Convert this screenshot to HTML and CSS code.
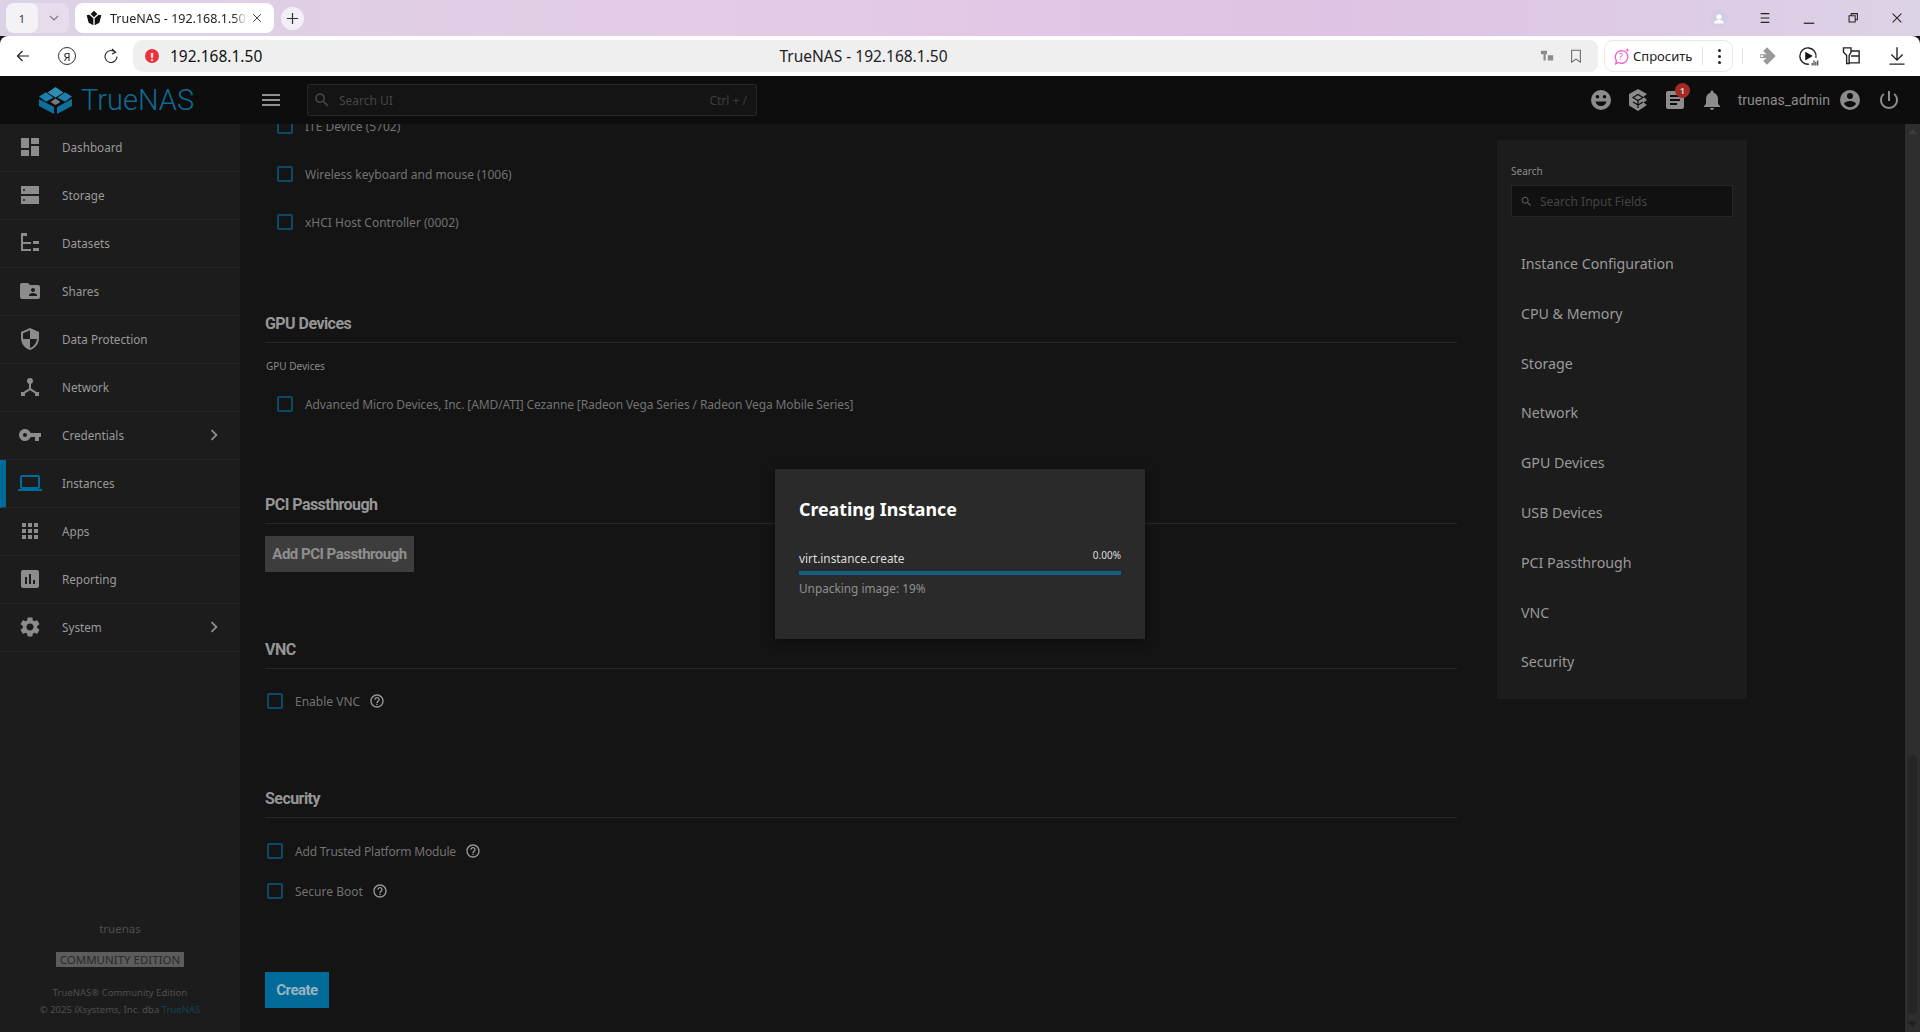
FILE: index.html
```html
<!DOCTYPE html>
<html lang="en">
<head>
    <meta charset="UTF-8">
    <title>TrueNAS - 192.168.1.50</title>
    <link rel="stylesheet" href="styles.css">
</head>
<body>
    <div class="tabbar">
        <div class="tab-group">
            <span class="tab-count">1</span>
            <svg class="tab-caret" viewBox="0 0 12 12"><path d="M2 4l4 4 4-4" fill="none" stroke="#7a7a85" stroke-width="1.2"/></svg>
        </div>
        <div class="tab">
            <svg class="tab-favicon" viewBox="0 0 24 24"><path d="M12 1l5 5-5 5-5-5zM1 8l4-1 6 5.5V23l-7-4zM23 8l-4-1-6 5.5V23l7-4z" fill="#111"/></svg>
            <span class="tab-title">TrueNAS - 192.168.1.50</span>
            <svg class="tab-close" viewBox="0 0 12 12"><path d="M1.5 1.5l9 9M10.5 1.5l-9 9" stroke="#333" stroke-width="1.1"/></svg>
        </div>
        <div class="tab-new">
            <svg viewBox="0 0 14 14"><path d="M7 1v12M1 7h12" stroke="#333" stroke-width="1.3"/></svg>
        </div>
        <div class="window-btns">
            <span class="profile-dot"><svg viewBox="0 0 16 16"><circle cx="8" cy="5.5" r="3" fill="#fff"/><path d="M2.5 13c0-3 3-4 5.5-4s5.5 1 5.5 4z" fill="#fff"/></svg></span>
            <svg class="win-icon" viewBox="0 0 16 16"><path d="M3 3h10M3 8h10M3 13h10" stroke="#222" stroke-width="1.2"/></svg>
            <svg class="win-icon" viewBox="0 0 16 16"><path d="M2 14h12" stroke="#222" stroke-width="1.4"/></svg>
            <svg class="win-icon" viewBox="0 0 16 16"><path d="M3.5 5.5h7v7h-7zM6 5.5V3h7v7h-2.5" fill="none" stroke="#222" stroke-width="1.2"/></svg>
            <svg class="win-icon" viewBox="0 0 16 16"><path d="M3 3l10 10M13 3L3 13" stroke="#222" stroke-width="1.2"/></svg>
        </div>
    </div>

    <div class="toolbar">
        <svg class="tool-icon" viewBox="0 0 16 16"><path d="M14 8H2.5M7.5 3L2.5 8l5 5" fill="none" stroke="#222" stroke-width="1.2"/></svg>
        <span class="ya-icon">Я</span>
        <svg class="tool-icon reload" viewBox="0 0 16 16"><path d="M12.5 4.5A6 6 0 1 0 14 8.5M9 1l3.7 3.3L9 6" fill="none" stroke="#222" stroke-width="1.1"/></svg>
        <div class="addressbar">
            <span class="warn-dot">!</span>
            <span class="address">192.168.1.50</span>
            <span class="page-title">TrueNAS - 192.168.1.50</span>
            <svg class="addr-icon" viewBox="0 0 16 16"><path d="M1 2h7v4H6.500v7H4V6H1zM9 7h6v6H9z" fill="#8b8b8b"/></svg>
            <svg class="addr-icon" viewBox="0 0 16 16"><path d="M3 1.5h10V15l-5-3.5L3 15z" fill="none" stroke="#666" stroke-width="1.2"/></svg>
        </div>
        <div class="ask-box">
            <svg class="ask-icon" viewBox="0 0 16 16"><path d="M8 2.5a6 6 0 1 1-3 11.2L2.500 15l.7-3.200A6 6 0 0 1 8 2.500z" fill="none" stroke="#ee5fc6" stroke-width="1.2"/><text x="5.5" y="11.5" font-size="9" font-family="Noto Sans, sans-serif" fill="#ee5fc6">?</text><path d="M13.5 0l.6 1.4 1.4.6-1.400.6-.6 1.400-.6-1.400-1.400-.6 1.400-.6z" fill="#ee5fc6"/></svg>
            <span class="ask-text">Спросить</span>
            <span class="ask-sep"></span>
            <span class="ask-more"><i></i><i></i><i></i></span>
        </div>
        <span class="tool-sep"></span>
        <svg class="tool-icon ext" viewBox="0 0 16 16"><path fill-rule="evenodd" d="M8 1l7 7-7 7-3-3 2.500-2.500H2.500V6.500h5L5 4zM3 7.300h2v1.400H3z" fill="#9a9a9a"/></svg>
        <svg class="tool-icon ext" viewBox="0 0 16 16"><path d="M13.5 9.500A6.500 6.500 0 1 0 8 14.500" fill="none" stroke="#222" stroke-width="1.1"/><path d="M5 4.500l6 3.500-6 3.500z" fill="#111"/><path d="M10.500 15.500v-2M12 15.500v-4M13.500 15.500v-3M15 15.500v-4" stroke="#333" stroke-width=".9"/></svg>
        <svg class="tool-icon ext" viewBox="0 0 16 16"><path d="M2 1.500h6V5L6.500 7.500V14h-2V7.500L2 5zM8 4h6.500v9.500H6.500M8 8h6.500" fill="none" stroke="#222" stroke-width="1.1"/></svg>
        <svg class="tool-icon ext" viewBox="0 0 16 16"><path d="M8 1v10M3.500 6.800L8 11.300l4.500-4.500M2 14.500h12" fill="none" stroke="#222" stroke-width="1.1"/></svg>
    </div>

    <div class="app">
        <header class="topbar">
            <div class="logo">
                <svg class="logo-mark" viewBox="0 0 33 27">
                    <path d="M16.500 0l8 5.500-8 5-8-5z" fill="#2e8cb5"/>
                    <path d="M0 9.500l7-4.200 7.500 5.500-7.500 4z" fill="#1a80ab"/>
                    <path d="M33 9.500l-7-4.200-7.500 5.500 7.500 4z" fill="#1a80ab"/>
                    <path d="M0 12l15 8v7L0 19z" fill="#0f6f9b"/>
                    <path d="M33 12l-15 8v7l15-8z" fill="#0f6f9b"/>
                    <path d="M16.500 11.500l5 3.500-5 3-5-3z" fill="#7a7a7a"/>
                </svg>
                <span class="logo-text">TrueNAS</span>
            </div>
            <svg class="menu-icon" viewBox="0 0 24 24"><path d="M3 18h18v-2H3v2zm0-5h18v-2H3v2zm0-7v2h18V6H3z"/></svg>
            <div class="top-search">
                <svg viewBox="0 0 24 24"><path d="M15.500 14h-.79l-.28-.27C15.410 12.590 16 11.110 16 9.500 16 5.910 13.090 3 9.500 3S3 5.910 3 9.500 5.910 16 9.500 16c1.610 0 3.090-.59 4.230-1.570l.27.28v.79l5 4.990L20.490 19l-4.990-5zm-6 0C7.010 14 5 11.990 5 9.500S7.010 5 9.500 5 14 7.010 14 9.500 11.990 14 9.500 14z"/></svg>
                <span class="top-search-text">Search UI</span>
                <span class="top-search-key">Ctrl + /</span>
            </div>
            <div class="top-actions">
                <svg class="top-icon" viewBox="0 0 24 24"><path fill-rule="evenodd" d="M12 2a10 10 0 1 0 0 20 10 10 0 0 0 0-20zM8.500 7a1.800 1.800 0 1 1 0 3.600 1.800 1.800 0 0 1 0-3.600zm7 0a1.800 1.800 0 1 1 0 3.600 1.800 1.800 0 0 1 0-3.600zM12 18c-3 0-5-2-5.500-4.500h11C17 16 15 18 12 18z"/></svg>
                <svg class="top-icon" viewBox="0 0 24 24"><path d="M12 1l9 5-3.500 2.800L21 12l-3.500 2.500L21 17l-9 6-9-5.500V6z"/><path d="M7 9.500l5-3 5 3-5 3zM12 12.500V20M7 14l5 3 5-3" fill="none" stroke="#0d0d0d" stroke-width="1.2"/></svg>
                <span class="jobs-btn">
                    <svg class="top-icon" viewBox="0 0 24 24"><path d="M19 3H5c-1.100 0-2 .9-2 2v14c0 1.100.9 2 2 2h14c1.100 0 2-.9 2-2V5c0-1.100-.9-2-2-2zm-5 14H7v-2h7v2zm3-4H7v-2h10v2zm0-4H7V7h10v2z"/></svg>
                    <span class="jobs-badge">1</span>
                </span>
                <svg class="top-icon" viewBox="0 0 24 24"><path d="M12 22c1.100 0 2-.9 2-2h-4c0 1.100.89 2 2 2zm6-6v-5c0-3.070-1.640-5.640-4.500-6.320V4c0-.83-.67-1.500-1.500-1.500s-1.500.67-1.500 1.500v.68C7.630 5.360 6 7.920 6 11v5l-2 2v1h16v-1l-2-2z"/></svg>
                <span class="top-user">truenas_admin</span>
                <svg class="top-icon" viewBox="0 0 24 24"><path d="M12 19.200C9.500 19.200 7.290 17.920 6 16c.03-2 4-3.100 6-3.100s5.970 1.100 6 3.100c-1.290 1.920-3.500 3.200-6 3.200M12 5a3 3 0 0 1 3 3 3 3 0 0 1-3 3 3 3 0 0 1-3-3 3 3 0 0 1 3-3m0-3A10 10 0 0 0 2 12a10 10 0 0 0 10 10 10 10 0 0 0 10-10A10 10 0 0 0 12 2z"/></svg>
                <svg class="top-icon" viewBox="0 0 24 24"><path d="M13 3h-2v10h2V3zm4.830 2.170l-1.420 1.420C17.990 7.860 19 9.810 19 12c0 3.870-3.130 7-7 7s-7-3.130-7-7c0-2.190 1.010-4.140 2.580-5.420L6.170 5.170C4.230 6.820 3 9.260 3 12c0 4.970 4.030 9 9 9s9-4.030 9-9c0-2.740-1.230-5.180-3.170-6.830z"/></svg>
            </div>
        </header>

        <div class="shell">
            <aside class="sidebar">
                <nav class="side-nav">
                    <a class="side-item"><svg viewBox="0 0 24 24"><path d="M3 13h8V3H3v10zm0 8h8v-6H3v6zm10 0h8V11h-8v10zm0-18v6h8V3h-8z"/></svg>Dashboard</a>
                    <a class="side-item"><svg viewBox="0 0 24 24"><path fill-rule="evenodd" d="M3 13h18v8H3zM3 3h18v8H3zM6 18a1 1 0 1 0 0-2 1 1 0 0 0 0 2zM6 8a1 1 0 1 0 0-2 1 1 0 0 0 0 2z"/></svg>Storage</a>
                    <a class="side-item"><svg viewBox="0 0 24 24"><path d="M3 2h6v3H5v6h3v2H5v5h3v2H3V5zM15 10h6v3h-6zM15 17h6v3h-6zM8 11h5v2H8zM8 18h5v2H8z"/></svg>Datasets</a>
                    <a class="side-item"><svg viewBox="0 0 24 24"><path d="M20 6h-8l-2-2H4c-1.100 0-1.990.9-1.990 2L2 18c0 1.100.9 2 2 2h16c1.100 0 2-.9 2-2V8c0-1.100-.9-2-2-2zm-5 3c1.100 0 2 .9 2 2s-.9 2-2 2-2-.9-2-2 .9-2 2-2zm4 8h-8v-1c0-1.330 2.670-2 4-2s4 .67 4 2v1z"/></svg>Shares</a>
                    <a class="side-item"><svg viewBox="0 0 24 24"><path d="M12 1L3 5v6c0 5.550 3.840 10.740 9 12 5.160-1.260 9-6.450 9-12V5l-9-4zm0 10.990h7c-.53 4.120-3.280 7.790-7 8.940V12H5V6.300l7-3.110v8.800z"/></svg>Data Protection</a>
                    <a class="side-item"><svg viewBox="0 0 24 24"><circle cx="12" cy="6" r="3"/><path d="M11 8h2v5.500l6 3.700-1 1.700-6-3.700-6 3.700-1-1.700 6-3.700z"/><path d="M3 17h4v4H3zM17 17h4v4h-4z"/></svg>Network</a>
                    <a class="side-item"><svg viewBox="0 0 24 24"><path d="M12.650 10C11.830 7.670 9.610 6 7 6c-3.310 0-6 2.690-6 6s2.690 6 6 6c2.610 0 4.830-1.670 5.650-4H17v4h4v-4h2v-4H12.650zM7 14c-1.100 0-2-.9-2-2s.9-2 2-2 2 .9 2 2-.9 2-2 2z"/></svg>Credentials<svg class="side-chevron" viewBox="0 0 24 24"><path d="M8.590 16.590L13.170 12 8.590 7.410 10 6l6 6-6 6z"/></svg></a>
                    <a class="side-item active"><svg viewBox="0 0 24 24"><path d="M20 18c1.100 0 1.990-.9 1.990-2L22 6c0-1.100-.9-2-2-2H4c-1.100 0-2 .9-2 2v10c0 1.100.9 2 2 2H0v2h24v-2h-4zM4 6h16v10H4V6z"/></svg>Instances</a>
                    <a class="side-item"><svg viewBox="0 0 24 24"><path d="M4 8h4V4H4v4zm6 12h4v-4h-4v4zm-6 0h4v-4H4v4zm0-6h4v-4H4v4zm6 0h4v-4h-4v4zm6-10v4h4V4h-4zm-6 4h4V4h-4v4zm6 6h4v-4h-4v4zm0 6h4v-4h-4v4z"/></svg>Apps</a>
                    <a class="side-item"><svg viewBox="0 0 24 24"><path d="M19 3H5c-1.100 0-2 .9-2 2v14c0 1.100.9 2 2 2h14c1.100 0 2-.9 2-2V5c0-1.100-.9-2-2-2zM9 17H7v-7h2v7zm4 0h-2V7h2v10zm4 0h-2v-4h2v4z"/></svg>Reporting</a>
                    <a class="side-item"><svg viewBox="0 0 24 24"><path d="M19.140 12.940c.04-.3.06-.61.06-.94 0-.32-.02-.64-.07-.94l2.030-1.580c.18-.14.23-.41.12-.61l-1.920-3.320c-.12-.22-.37-.29-.59-.22l-2.390.96c-.5-.38-1.030-.7-1.620-.94l-.36-2.540c-.04-.24-.24-.41-.48-.41h-3.840c-.24 0-.43.17-.47.41l-.36 2.540c-.59.24-1.130.57-1.620.94l-2.390-.96c-.22-.08-.47 0-.59.22L2.740 8.870c-.12.21-.08.47.12.61l2.030 1.580c-.05.3-.09.63-.09.94s.02.64.07.94l-2.030 1.580c-.18.14-.23.41-.12.61l1.920 3.320c.12.22.37.29.59.22l2.390-.96c.5.38 1.030.7 1.620.94l.36 2.540c.05.24.24.41.48.41h3.840c.24 0 .44-.17.47-.41l.36-2.540c.59-.24 1.130-.56 1.620-.94l2.390.96c.22.08.47 0 .59-.22l1.920-3.320c.12-.22.07-.47-.12-.61l-2.010-1.580zM12 15.600c-1.980 0-3.600-1.620-3.600-3.600s1.620-3.600 3.600-3.600 3.600 1.620 3.600 3.600-1.620 3.600-3.600 3.600z"/></svg>System<svg class="side-chevron" viewBox="0 0 24 24"><path d="M8.590 16.590L13.170 12 8.590 7.410 10 6l6 6-6 6z"/></svg></a>
                </nav>
                <div class="side-footer">
                    <div class="host-name">truenas</div>
                    <div class="edition">COMMUNITY EDITION</div>
                    <div class="copyright">TrueNAS® Community Edition</div>
                    <div class="copyright">© 2025 iXsystems, Inc. dba <span class="copy-link">TrueNAS</span></div>
                </div>
            </aside>

            <main class="main">
                <form class="form">
                    <div class="usb-list">
                        <label class="check-row indented"><span class="check"></span>ITE Device (5702)</label>
                        <label class="check-row indented"><span class="check"></span>Wireless keyboard and mouse (1006)</label>
                        <label class="check-row indented"><span class="check"></span>xHCI Host Controller (0002)</label>
                    </div>

                    <section class="section gpu">
                        <h3 class="section-title">GPU Devices</h3>
                        <div class="field-label">GPU Devices</div>
                        <label class="check-row indented tight"><span class="check"></span>Advanced Micro Devices, Inc. [AMD/ATI] Cezanne [Radeon Vega Series / Radeon Vega Mobile Series]</label>
                    </section>

                    <section class="section pci">
                        <h3 class="section-title">PCI Passthrough</h3>
                        <button type="button" class="btn-grey">Add PCI Passthrough</button>
                    </section>

                    <section class="section vnc">
                        <h3 class="section-title">VNC</h3>
                        <label class="check-row"><span class="check"></span>Enable VNC<svg class="help" viewBox="0 0 24 24"><path d="M11 18h2v-2h-2v2zm1-16C6.480 2 2 6.480 2 12s4.480 10 10 10 10-4.480 10-10S17.520 2 12 2zm0 18c-4.410 0-8-3.590-8-8s3.590-8 8-8 8 3.590 8 8-3.590 8-8 8zm0-14c-2.210 0-4 1.790-4 4h2c0-1.100.9-2 2-2s2 .9 2 2c0 2-3 1.750-3 5h2c0-2.250 3-2.500 3-5 0-2.210-1.790-4-4-4z"/></svg></label>
                    </section>

                    <section class="section security">
                        <h3 class="section-title">Security</h3>
                        <label class="check-row tight"><span class="check"></span>Add Trusted Platform Module<svg class="help" viewBox="0 0 24 24"><path d="M11 18h2v-2h-2v2zm1-16C6.480 2 2 6.480 2 12s4.480 10 10 10 10-4.480 10-10S17.520 2 12 2zm0 18c-4.410 0-8-3.590-8-8s3.590-8 8-8 8 3.590 8 8-3.590 8-8 8zm0-14c-2.210 0-4 1.790-4 4h2c0-1.100.9-2 2-2s2 .9 2 2c0 2-3 1.750-3 5h2c0-2.250 3-2.500 3-5 0-2.210-1.790-4-4-4z"/></svg></label>
                        <label class="check-row"><span class="check"></span>Secure Boot<svg class="help" viewBox="0 0 24 24"><path d="M11 18h2v-2h-2v2zm1-16C6.480 2 2 6.480 2 12s4.480 10 10 10 10-4.480 10-10S17.520 2 12 2zm0 18c-4.410 0-8-3.590-8-8s3.590-8 8-8 8 3.590 8 8-3.590 8-8 8zm0-14c-2.210 0-4 1.790-4 4h2c0-1.100.9-2 2-2s2 .9 2 2c0 2-3 1.750-3 5h2c0-2.250 3-2.500 3-5 0-2.210-1.790-4-4-4z"/></svg></label>
                    </section>

                    <button type="button" class="btn-create">Create</button>
                </form>

                <div class="form-panel">
                    <div class="panel-label">Search</div>
                    <div class="panel-search">
                        <svg viewBox="0 0 24 24"><path d="M15.500 14h-.79l-.28-.27C15.410 12.590 16 11.110 16 9.500 16 5.910 13.090 3 9.500 3S3 5.910 3 9.500 5.910 16 9.500 16c1.610 0 3.090-.59 4.230-1.570l.27.28v.79l5 4.990L20.490 19l-4.990-5zm-6 0C7.010 14 5 11.990 5 9.500S7.010 5 9.500 5 14 7.010 14 9.500 11.990 14 9.500 14z"/></svg>
                        <span>Search Input Fields</span>
                    </div>
                    <ul class="panel-nav">
                        <li>Instance Configuration</li>
                        <li>CPU &amp; Memory</li>
                        <li>Storage</li>
                        <li>Network</li>
                        <li>GPU Devices</li>
                        <li>USB Devices</li>
                        <li>PCI Passthrough</li>
                        <li>VNC</li>
                        <li>Security</li>
                    </ul>
                </div>

                <div class="scrollbar">
                    <svg class="scroll-arrow up" viewBox="0 0 10 6"><path d="M5 0l5 6H0z"/></svg>
                    <div class="scroll-track"><div class="scroll-thumb"></div></div>
                    <svg class="scroll-arrow" viewBox="0 0 10 6"><path d="M5 6L0 0h10z"/></svg>
                </div>
            </main>
        </div>

        <div class="overlay">
            <div class="dialog">
                <h2 class="dialog-title">Creating Instance</h2>
                <div class="job-head">
                    <span class="job-name">virt.instance.create</span>
                    <span class="job-pct">0.00%</span>
                </div>
                <div class="job-bar"></div>
                <div class="job-status">Unpacking image: 19%</div>
            </div>
        </div>
    </div>
</body>
</html>
```

FILE: styles.css
```css
* {
    box-sizing: border-box;
}
html, body {
    height: 100%;
    margin: 0;
    overflow: hidden;
}
body {
    display: flex;
    flex-direction: column;
    font-family: "Noto Sans", sans-serif;
    background: #141414;
}
svg {
    display: block;
    flex: none;
}

/* browser chrome */
.tabbar {
    height: 36px;
    flex: none;
    display: flex;
    align-items: center;
    padding-left: 6px;
    background: linear-gradient(90deg, #dcd2e6 0%, #e4cce6 35%, #dfc3e4 70%, #dcd2e6 100%);
}
.tab-group {
    width: 63px;
    height: 30px;
    display: flex;
    align-items: center;
    border-radius: 8px;
    background: #e6dcec;
}
.tab-count {
    width: 32px;
    height: 30px;
    display: flex;
    align-items: center;
    justify-content: center;
    border-radius: 8px;
    font-size: 11px;
    color: #333;
    background: #f4f2f7;
}
.tab-caret {
    width: 12px;
    height: 12px;
    margin-left: 10px;
}
.tab {
    width: 199px;
    height: 30px;
    margin-left: 6px;
    display: flex;
    align-items: center;
    padding-left: 11px;
    border-radius: 8px;
    background: #fff;
}
.tab-favicon {
    width: 16px;
    height: 16px;
}
.tab-title {
    width: 137px;
    margin-left: 8px;
    overflow: hidden;
    white-space: nowrap;
    font-size: 12.5px;
    color: #222;
    -webkit-mask-image: linear-gradient(90deg, #000 90%, transparent);
}
.tab-close {
    width: 10px;
    height: 10px;
    margin-left: 5px;
}
.tab-new {
    width: 23px;
    height: 23px;
    margin-left: 7px;
    padding: 5px;
    border-radius: 50%;
    background: #f3eff6;
}
.window-btns {
    margin-left: auto;
    display: flex;
    align-items: center;
}
.profile-dot {
    width: 18px;
    height: 19px;
    margin-right: 30px;
    padding: 3px 2px;
    border-radius: 50%;
    background: #d2cde4;
}
.win-icon {
    width: 14px;
    height: 14px;
    margin-right: 30px;
}
.win-icon:last-child {
    margin-right: 16px;
}

.toolbar {
    height: 40px;
    flex: none;
    display: flex;
    align-items: center;
    padding: 0 13px 0 15px;
    border-radius: 8px 8px 0 0;
    background: #fff;
}
.tool-icon {
    width: 16px;
    height: 16px;
}
.ya-icon {
    width: 18px;
    height: 18px;
    margin-left: 27px;
    display: flex;
    align-items: center;
    justify-content: center;
    border: 1px solid #333;
    border-radius: 50%;
    font-size: 11px;
    color: #222;
}
.reload {
    margin-left: 27px;
}
.addressbar {
    flex: 1;
    height: 32px;
    margin-left: 14px;
    position: relative;
    display: flex;
    align-items: center;
    padding: 0 15px 0 12px;
    border-radius: 10px 8px 8px 10px;
    background: #efefef;
}
.warn-dot {
    width: 14px;
    height: 14px;
    display: flex;
    align-items: center;
    justify-content: center;
    border-radius: 50%;
    font-size: 11px;
    font-weight: 700;
    color: #fff;
    background: #e8323c;
}
.address {
    margin-left: 11px;
    font-size: 15.5px;
    color: #111;
}
.page-title {
    position: absolute;
    left: 0;
    right: 0;
    padding-right: 4px;
    text-align: center;
    font-size: 15.5px;
    color: #222;
}
.addr-icon {
    width: 14px;
    height: 14px;
    margin-left: 15px;
}
.page-title + .addr-icon {
    margin-left: auto;
}
.ask-box {
    width: 129px;
    height: 32px;
    margin-left: 6px;
    display: flex;
    align-items: center;
    padding: 0 11px 0 8px;
    border: 1px solid #e8e8e8;
    border-radius: 9px;
}
.ask-icon {
    width: 17px;
    height: 17px;
}
.ask-text {
    margin-left: 3px;
    font-size: 13px;
    white-space: nowrap;
    color: #222;
}
.ask-sep {
    width: 1px;
    height: 18px;
    margin-left: auto;
    background: #e3e3e3;
}
.ask-more {
    width: 3px;
    margin-left: 15px;
    display: flex;
    flex-direction: column;
    gap: 3px;
}
.ask-more i {
    width: 3px;
    height: 3px;
    border-radius: 50%;
    background: #222;
}
.tool-sep {
    width: 1px;
    height: 16px;
    margin-left: 9px;
    background: #e3e3e3;
}
.ext {
    width: 20px;
    height: 20px;
    margin-left: 22px;
}
.tool-sep + .ext {
    margin-left: 14px;
}
.ext:last-child {
    margin-left: 26px;
}

/* truenas */
.app {
    flex: 1;
    min-height: 0;
    position: relative;
    display: flex;
    flex-direction: column;
}
.topbar {
    height: 48px;
    flex: none;
    position: relative;
    z-index: 2;
    display: flex;
    align-items: center;
    background: #0d0d0d;
}
.logo {
    width: 240px;
    padding-left: 39px;
    display: flex;
    align-items: center;
}
.logo-mark {
    width: 33px;
    height: 27px;
}
.logo-text {
    margin-left: 9px;
    font-family: Roboto, sans-serif;
    font-size: 29px;
    font-weight: 300;
    color: #0f6a92;
}
.menu-icon {
    width: 24px;
    height: 24px;
    margin-left: 19px;
    fill: #8f8f8f;
}
.top-search {
    width: 450px;
    height: 32px;
    margin-left: 24px;
    display: flex;
    align-items: center;
    padding: 0 9px 0 5px;
    border: 1px solid #262626;
    border-radius: 2px;
    background: #141414;
}
.top-search svg {
    width: 18px;
    height: 18px;
    fill: #474747;
}
.top-search-text {
    margin-left: 8px;
    font-size: 12px;
    color: #464646;
}
.top-search-key {
    margin-left: auto;
    font-size: 12px;
    color: #3d3d3d;
}
.top-actions {
    margin-left: auto;
    padding-right: 19px;
    display: flex;
    align-items: center;
}
.top-icon {
    width: 24px;
    height: 24px;
    fill: #8c8c8c;
}
.top-actions > svg, .jobs-btn {
    margin-left: 13px;
}
.top-actions > svg:last-child {
    margin-left: 15px;
}
.jobs-btn {
    position: relative;
}
.jobs-badge {
    position: absolute;
    top: -5px;
    right: -3px;
    width: 15px;
    height: 15px;
    border-radius: 50%;
    display: flex;
    align-items: center;
    justify-content: center;
    font-size: 9px;
    font-weight: 700;
    color: #ccc;
    background: #a52a25;
}
.top-user {
    margin-left: 14px;
    font-family: Roboto, sans-serif;
    font-size: 14px;
    color: #8c8c8c;
}
.top-actions .top-user + svg {
    margin-left: 8px;
}

.shell {
    flex: 1;
    min-height: 0;
    display: flex;
}
.sidebar {
    width: 240px;
    flex: none;
    display: flex;
    flex-direction: column;
    background: #1c1c1c;
}
.side-nav {
    display: flex;
    flex-direction: column;
}
.side-item {
    height: 48px;
    display: flex;
    align-items: center;
    padding: 0 0 1px 18px;
    border-bottom: 1px solid #262626;
    font-size: 11.7px;
    color: #9a9a9a;
}
.side-item svg {
    width: 24px;
    height: 24px;
    margin-right: 20px;
    fill: #8c8c8c;
}
.side-item .side-chevron {
    width: 22px;
    height: 22px;
    margin: 0 0 0 auto;
    position: relative;
    left: -15px;
}
.side-item.active {
    border-left: 6px solid #006a98;
    padding-left: 12px;
}
.side-item.active svg {
    fill: #006a98;
}
.side-footer {
    margin-top: auto;
    padding-bottom: 12px;
    display: flex;
    flex-direction: column;
    align-items: center;
}
.host-name {
    font-size: 11.5px;
    color: #4f4f4f;
}
.edition {
    margin: 16px 0 19px;
    padding: 0 4px;
    height: 15px;
    line-height: 15px;
    font-size: 11.5px;
    color: #2a2a2a;
    background: #5c5c5c;
}
.copyright {
    height: 17px;
    font-size: 9.5px;
    color: #4f4f4f;
}
.copy-link {
    color: #0f4258;
}

.main {
    flex: 1;
    min-width: 0;
    display: flex;
    align-items: flex-start;
    overflow: hidden;
    background: #141414;
}
.form {
    width: 1192px;
    flex: none;
    margin: -22px 0 0 25px;
}
.usb-list {
    display: flex;
    flex-direction: column;
}
.check-row {
    height: 48px;
    display: flex;
    align-items: center;
    padding-left: 2px;
    font-size: 12px;
    color: #727272;
}
.check-row.indented {
    padding-left: 12px;
}
.check-row.tight {
    letter-spacing: -0.12px;
}
.security .check-row.tight {
    letter-spacing: -0.2px;
}
.check {
    width: 16px;
    height: 16px;
    margin-right: 12px;
    border: 2px solid #0b4a68;
    border-radius: 2px;
}
.help {
    width: 16px;
    height: 16px;
    margin-left: 9px;
    fill: #9a9a9a;
}
.section {
    display: flex;
    flex-direction: column;
}
.section-title {
    margin: 0;
    height: 29px;
    padding-bottom: 10px;
    border-bottom: 1px solid #272727;
    font-family: Roboto, sans-serif;
    font-size: 16px;
    font-weight: 700;
    letter-spacing: -0.55px;
    color: #969696;
}
.gpu {
    margin-top: 68px;
}
.field-label {
    margin-top: 15.5px;
    font-size: 10px;
    line-height: 14px;
    color: #8a8a8a;
    padding-left: 1px;
}
.gpu .check-row {
    margin-top: 7.5px;
}
.pci {
    margin-top: 67px;
}
.btn-grey, .btn-create {
    height: 36px;
    padding: 0;
    border: 0;
    font-family: Roboto, sans-serif;
    font-size: 15px;
    font-weight: 700;
    letter-spacing: -0.5px;
}
.btn-grey {
    width: 149px;
    margin-top: 12px;
    color: #8f8f8f;
    background: #3d3d3d;
}
.vnc {
    margin-top: 68px;
}
.vnc .check-row {
    margin-top: 8px;
}
.security {
    margin-top: 64px;
}
.security .check-row {
    height: 40px;
}
.security .check-row:first-of-type {
    margin-top: 13px;
}
.btn-create {
    display: block;
    width: 64px;
    margin-top: 61px;
    color: #9ab4c2;
    background: #006a98;
}

.form-panel {
    width: 250px;
    flex: none;
    margin: 16px 0 0 40px;
    padding: 24px 14px 12px;
    background: #1c1c1c;
}
.panel-label {
    font-size: 10px;
    line-height: 14px;
    color: #8a8a8a;
}
.panel-search {
    height: 32px;
    margin-top: 7px;
    display: flex;
    align-items: center;
    padding-left: 8px;
    border: 1px solid #262626;
    background: #111;
    font-size: 12px;
    color: #444;
}
.panel-search svg {
    width: 13px;
    height: 13px;
    margin-right: 7px;
    fill: #595959;
}
.panel-nav {
    margin: 22px 0 0;
    padding: 0 0 0 10px;
    list-style: none;
}
.panel-nav li {
    height: 49.8px;
    line-height: 49.8px;
    font-size: 14.2px;
    color: #9a9a9a;
}

.scrollbar {
    width: 15px;
    height: 100%;
    margin-left: auto;
    display: flex;
    flex-direction: column;
    align-items: center;
    background: #2e2e2e;
}
.scroll-arrow {
    width: 9px;
    height: 15px;
    fill: #1e1e1e;
}
.scroll-arrow.up {
    fill: #3c3c3c;
}
.scroll-track {
    flex: 1;
    width: 100%;
    display: flex;
    flex-direction: column;
    justify-content: flex-end;
    align-items: center;
}
.scroll-thumb {
    width: 9px;
    height: 259px;
    margin-bottom: 3px;
    border-radius: 5px;
    background: #252525;
}

.overlay {
    position: absolute;
    inset: 0;
    z-index: 5;
    display: flex;
    align-items: center;
    justify-content: center;
}
.dialog {
    width: 370px;
    height: 170px;
    padding: 25px 24px 24px;
    background: #2a2a2a;
    box-shadow: 0 3px 8px rgba(0, 0, 0, 0.4);
}
.dialog-title {
    margin: 0;
    font-size: 17.8px;
    line-height: 30px;
    font-weight: 700;
    color: #fff;
}
.job-head {
    margin-top: 26px;
    display: flex;
    justify-content: space-between;
    align-items: flex-start;
    height: 21px;
}
.job-name {
    font-size: 11.8px;
    line-height: 17px;
    color: #ddd;
}
.job-pct {
    font-size: 10px;
    line-height: 10px;
    color: #ddd;
}
.job-bar {
    height: 4px;
    background: #136083;
}
.job-status {
    margin-top: 5px;
    font-size: 11.8px;
    line-height: 17px;
    color: #8f8f8f;
}
```
